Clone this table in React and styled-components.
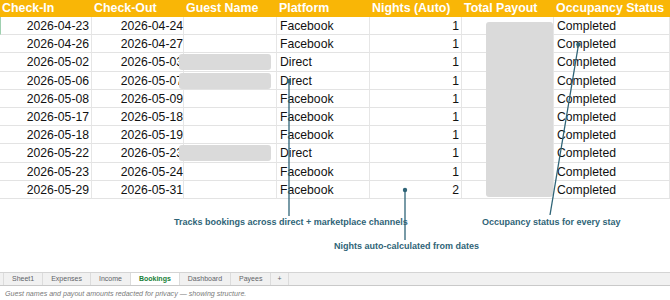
import React from "react";
import styled, { createGlobalStyle } from "styled-components";

const GlobalStyle = createGlobalStyle`
  html, body {
    margin: 0;
    padding: 0;
    background: #ffffff;
  }
  body {
    font-family: "Liberation Sans", Arial, sans-serif;
    width: 670px;
    height: 300px;
    overflow: hidden;
  }
`;

const INK = "#2f6477";
const ROW_H = 18.2;

const Page = styled.div`
  position: relative;
  width: 670px;
  height: 300px;
  display: flex;
  flex-direction: column;
`;

const Grid = styled.div`
  position: relative;
  display: grid;
  grid-template-columns: 92px 92px 93px 93px 92px 92px 1fr;
`;

const HeadCell = styled.div`
  height: 17px;
  line-height: 17px;
  background: #f9b606;
  color: #ffffff;
  font-weight: 700;
  font-size: 12.4px;
  padding-left: 2px;
  white-space: nowrap;
  overflow: hidden;
`;

const Cell = styled.div`
  position: relative;
  height: ${ROW_H}px;
  line-height: ${ROW_H}px;
  box-sizing: border-box;
  border-bottom: 1px solid #e3e3e3;
  border-right: 1px solid #e6e6e6;
  font-size: 12.2px;
  color: #111;
  white-space: nowrap;
  text-align: ${(p) => (p.$right != null ? "right" : "left")};
  padding: ${(p) => (p.$right != null ? `0 ${p.$right}px 0 0` : "0 0 0 3px")};
  border-left: ${(p) => (p.$marked ? "1px solid #9fd0b0" : "none")};
`;

const Redact = styled.span`
  position: absolute;
  left: -5px;
  top: 1px;
  width: 92px;
  height: 16px;
  border-radius: 3px;
  background: #dadada;
`;

const PayoutRedact = styled.div`
  position: absolute;
  left: 486px;
  top: 22px;
  width: 67px;
  height: 175px;
  border-radius: 3px;
  background: #dadada;
`;

const Notes = styled.div`
  flex: 1;
`;

const Overlay = styled.svg`
  position: absolute;
  left: 0;
  top: 0;
  pointer-events: none;
`;

const Label = styled.div`
  position: absolute;
  left: ${(p) => p.$x}px;
  top: ${(p) => p.$y}px;
  font-size: 9px;
  font-weight: 700;
  color: ${INK};
  white-space: nowrap;
`;

const TabBar = styled.div`
  height: 12px;
  display: flex;
  align-items: stretch;
  background: #f1f1f1;
  border-top: 1px solid #d4d4d4;
  border-bottom: 1px solid #c9c9c9;
  padding-left: 3px;
`;

const Tab = styled.div`
  font-size: 7px;
  line-height: 12px;
  padding: 0 ${(p) => (p.$pad != null ? p.$pad : 8)}px;
  color: ${(p) => (p.$active ? "#188038" : "#5f6368")};
  font-weight: ${(p) => (p.$active ? 700 : 400)};
  background: ${(p) => (p.$active ? "#ffffff" : "transparent")};
  border-left: 1px solid #dcdcdc;
  &:last-child {
    border-right: 1px solid #dcdcdc;
  }
`;

const Caption = styled.div`
  height: 14px;
  line-height: 16px;
  font-size: 7.1px;
  font-style: italic;
  color: #7a7a7a;
  padding-left: 5px;
`;

const headers = [
  "Check-In",
  "Check-Out",
  "Guest Name",
  "Platform",
  "Nights (Auto)",
  "Total Payout",
  "Occupancy Status",
];

const rows = [
  ["2026-04-23", "2026-04-24", false, "Facebook", 1],
  ["2026-04-26", "2026-04-27", false, "Facebook", 1],
  ["2026-05-02", "2026-05-03", true, "Direct", 1],
  ["2026-05-06", "2026-05-07", true, "Direct", 1],
  ["2026-05-08", "2026-05-09", false, "Facebook", 1],
  ["2026-05-17", "2026-05-18", false, "Facebook", 1],
  ["2026-05-18", "2026-05-19", false, "Facebook", 1],
  ["2026-05-22", "2026-05-23", true, "Direct", 1],
  ["2026-05-23", "2026-05-24", false, "Facebook", 1],
  ["2026-05-29", "2026-05-31", false, "Facebook", 2],
];

const tabs = ["Sheet1", "Expenses", "Income", "Bookings", "Dashboard", "Payees"];

export default function App() {
  return (
    <Page>
      <GlobalStyle />
      <Grid>
        {headers.map((h) => (
          <HeadCell key={h}>{h}</HeadCell>
        ))}
        {rows.map(([inDate, outDate, hidden, platform, nights], i) => (
          <React.Fragment key={inDate + i}>
            <Cell $right={2} $marked={i === 0}>{inDate}</Cell>
            <Cell $right={0}>{outDate}</Cell>
            <Cell>{hidden && <Redact />}</Cell>
            <Cell>{platform}</Cell>
            <Cell $right={2}>{nights}</Cell>
            <Cell />
            <Cell>Completed</Cell>
          </React.Fragment>
        ))}
        <PayoutRedact />
      </Grid>
      <Notes />
      <TabBar>
        {tabs.map((t) => (
          <Tab key={t} $active={t === "Bookings"}>
            {t}
          </Tab>
        ))}
        <Tab $pad={6}>+</Tab>
      </TabBar>
      <Caption>
        Guest names and payout amounts redacted for privacy — showing structure.
      </Caption>

      <Overlay width="670" height="300" viewBox="0 0 670 300">
        <g stroke={INK} strokeWidth="1.3" fill="none">
          <line x1="289" y1="81" x2="289" y2="216" />
          <line x1="405" y1="190" x2="405" y2="240" />
          <line x1="578.5" y1="44.5" x2="550" y2="215" />
        </g>
        <g fill={INK}>
          <circle cx="289" cy="81" r="2.2" />
          <circle cx="405" cy="190" r="2.2" />
          <circle cx="578.5" cy="44.5" r="2.2" />
        </g>
      </Overlay>
      <Label $x={174} $y={217}>Tracks bookings across direct + marketplace channels</Label>
      <Label $x={334} $y={241}>Nights auto-calculated from dates</Label>
      <Label $x={482} $y={217}>Occupancy status for every stay</Label>
    </Page>
  );
}
